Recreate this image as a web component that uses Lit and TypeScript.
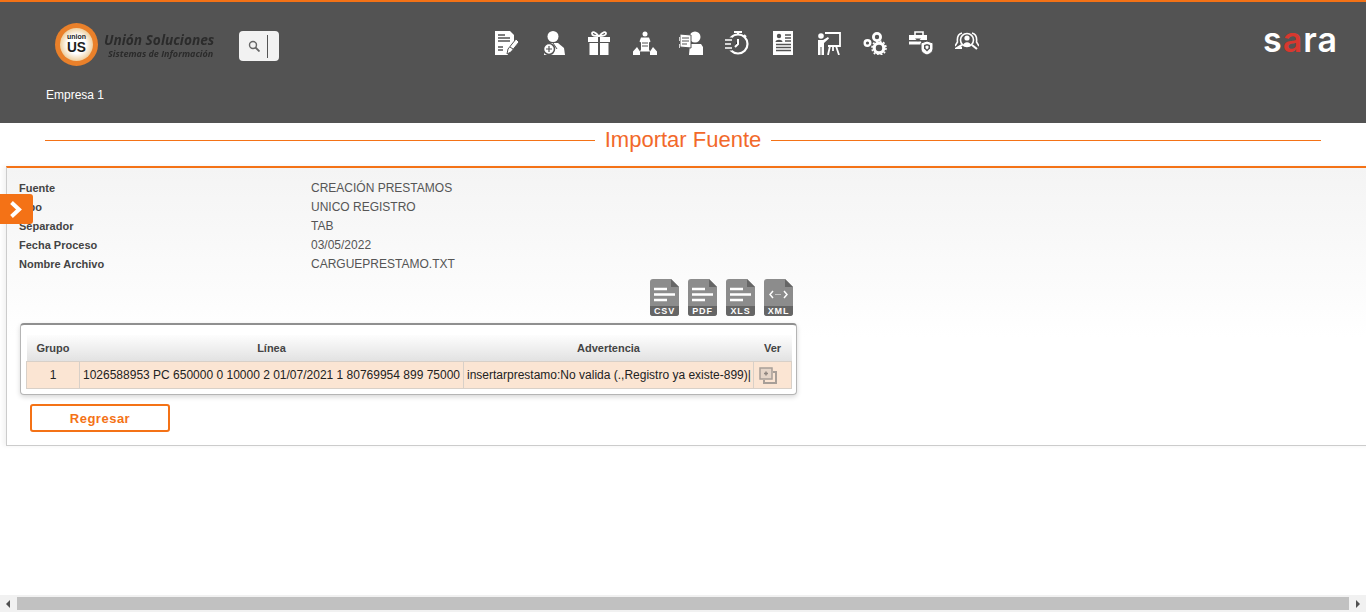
import {LitElement, html, css, svg} from 'lit';
import {customElement} from 'lit/decorators.js';

const BG = '#535353';

const NAV_ICONS = [
  // document with pencil
  svg`<path fill="#fff" d="M0 0h15l4 4v9l-6 8v3H0z"/><path stroke="${BG}" stroke-width="1.400" d="M3 4h7M3 7h12M3 10h12M3 16h5M3 19h5"/><path fill="#fff" stroke="${BG}" d="M12 23l1-5 8-10 3 3-8 10z"/><path stroke="${BG}" d="M15 16l3 2"/>`,
  // person with round badge
  svg`<circle cx="12" cy="5.500" r="5.500" fill="#fff"/><path fill="#fff" d="M7 12h10l6 5 1 7H3l1-8z"/><path stroke="${BG}" d="M12 12l4 6"/><circle cx="8" cy="18" r="5.500" fill="#fff" stroke="${BG}" stroke-width="1.500"/><path stroke="${BG}" stroke-width="1.200" d="M5 18h6M8 15v6"/>`,
  // gift
  svg`<path fill="#fff" d="M1 6h10v5H1zM13 6h10v5H13zM2.500 12H11v12H2.500zM13 12h8.500v12H13z"/><path fill="none" stroke="#fff" stroke-width="1.800" d="M11.500 5C9 1 5 0 5 2.500S8 5 11.500 5C15 5 19 5 19 2.500S15 1 12.500 5"/>`,
  // pyramid of people
  svg`<circle cx="12" cy="3" r="2.500" fill="#fff"/><path fill="#fff" d="M8 6.500h8l1.500 4-1.500 1v7l1 2H7l1-2v-7l-1.500-1z"/><path stroke="${BG}" d="M9 12h6M9 15h6"/><path fill="#fff" d="M4 16l3 4.500V24H0v-3.500zM20 16l4 4.500V24h-7v-3.500z"/>`,
  // person holding a document
  svg`<circle cx="16" cy="6" r="5.500" fill="#fff"/><path fill="#fff" d="M11 13h11l2 3v8H10z"/><path fill="#fff" stroke="${BG}" d="M1 3l11 1v13L1 16z"/><path stroke="${BG}" d="M3 7h7M3 10h7M3 13h5"/><path stroke="#fff" stroke-width="1.500" d="M0 6v4M0 13v4"/>`,
  // stopwatch
  svg`<circle cx="13" cy="13" r="9.500" fill="none" stroke="#fff" stroke-width="2.200"/><path stroke="#fff" stroke-width="2" d="M13 0v3M9 1h8M13 8v5l-3 3M19 4l2 2"/><path stroke="${BG}" stroke-width="5" d="M0 9h7M0 13h6M0 17h7"/><path stroke="#fff" stroke-width="1.500" d="M0 9h7M0 13h6M0 17h7"/>`,
  // CV sheet
  svg`<path fill="#fff" d="M2 0h20v24H2z"/><circle cx="8" cy="5" r="2.200" fill="${BG}"/><path fill="${BG}" d="M4.500 11c0-3 7-3 7 0z"/><path stroke="${BG}" stroke-width="1.300" d="M14 4h6M14 7h6M14 10h6M5 13.500h15M5 16.500h15M5 19.500h15"/>`,
  // teacher at a board
  svg`<circle cx="4" cy="5" r="2.800" fill="#fff"/><path fill="#fff" d="M1 9h5l5-3 1 1.500L7 12v12H1z"/><path stroke="${BG}" d="M4 16v8"/><path fill="none" stroke="#fff" stroke-width="1.800" d="M8 2h15v13H11M13 15l-2 9M19 15l3 9M16 15v5"/>`,
  // gears
  svg`<circle cx="14" cy="6" r="3.600" fill="none" stroke="#fff" stroke-width="2.800"/><circle cx="4.500" cy="12" r="2.800" fill="none" stroke="#fff" stroke-width="2.400"/><circle cx="16" cy="17" r="4.800" fill="none" stroke="#fff" stroke-width="3.200"/><circle cx="16" cy="17" r="7" fill="none" stroke="#fff" stroke-width="1.600" stroke-dasharray="2 1.700"/>`,
  // briefcase and shield
  svg`<path fill="none" stroke="#fff" stroke-width="1.600" d="M6 4V1h8v3"/><path fill="#fff" d="M0 4h18v5H0zM0 10.500h12l1 3H0z"/><path fill="${BG}" d="M6 7.500l3 3 3-3z"/><path fill="#fff" stroke="${BG}" d="M12 12l6-2 6 2v6c0 3-3 5-6 6-3-1-6-3-6-6z"/><path fill="${BG}" d="M15 14l3-1 3 1v3.500l-3 3-3-3z"/><path fill="#fff" d="M16.500 15l1.500-.5 1.500.5v2l-1.500 1.500-1.500-1.500z"/>`,
  // group and magnifier
  svg`<circle cx="12" cy="9" r="6.500" fill="none" stroke="#fff" stroke-width="1.600"/><circle cx="12" cy="7" r="2.600" fill="#fff"/><path fill="#fff" d="M8 15c0-5 8-5 8 0z"/><path fill="none" stroke="#fff" stroke-width="1.600" d="M7 2C3 3 2 7 2.500 11L0 15M17 2c4 1 5 5 4.500 9L24 15"/><path stroke="#fff" stroke-width="2.200" d="M17 14l5 4M7 14l-5 3h5"/>`,
];

@customElement('app-root')
export class AppRoot extends LitElement {

  static override styles = css`
    :host {
      display: flex;
      flex-direction: column;
      height: 612px;
      overflow: hidden;
      position: relative;
      background: #fff;
      font-family: "Liberation Sans", Arial, sans-serif;
    }

    .top {
      height: 121px;
      flex: none;
      background: #535353;
      border-top: 2px solid #f47216;
      display: flex;
      flex-direction: column;
    }

    .top-row {
      display: grid;
      grid-template-columns: 480px 1fr 140px;
      height: 82px;
    }

    .brand {
      display: flex;
      align-items: flex-start;
      padding: 21px 0 0 54px;
    }

    .seal {
      width: 45px;
      height: 43px;
      flex: none;
      margin-right: 5px;
    }

    .brand-text {
      width: 135px;
      padding-top: 7px;
      font-family: "Open Sans", sans-serif;
      font-style: italic;
      font-weight: 700;
      color: #2b2b2b;
      white-space: nowrap;
      filter: blur(0.3px);
    }

    .brand-name {
      font-size: 13.7px;
      line-height: 19px;
    }

    .brand-sub {
      font-size: 9px;
      line-height: 12px;
      padding: 0 0 0 4px;
      margin-top: -1px;
    }

    .search {
      width: 40px;
      height: 30px;
      margin-top: 8px;
      border-radius: 4px;
      background: #f2f2f2;
      display: flex;
      align-items: center;
      box-sizing: border-box;
      padding-left: 9px;
      gap: 7px;
    }

    .search svg {
      width: 12px;
      height: 12px;
    }

    .caret {
      width: 1px;
      height: 23px;
      background: #555;
    }

    .nav {
      display: flex;
      gap: 22px;
      padding: 29px 0 0 15px;
      align-items: flex-start;
    }

    .nav svg {
      width: 24px;
      height: 24px;
      display: block;
      filter: blur(0.4px);
    }

    .sara {
      font-family: Inter, sans-serif;
      font-size: 34px;
      font-weight: 600;
      line-height: 34px;
      color: #fff;
      letter-spacing: 1px;
      padding: 21px 0 0 37px;
    }

    .sara span {
      color: #d8382f;
    }

    .company {
      color: #fff;
      font-size: 12px;
      padding-left: 46px;
      line-height: 14px;
      margin-top: 4px;
    }

    .title {
      height: 34px;
      flex: none;
      margin: 0 45px;
      display: flex;
      align-items: center;
      gap: 10px;
      color: #f2692a;
      font-size: 22px;
      white-space: nowrap;
    }

    .title::before,
    .title::after {
      content: '';
      flex: 1;
      height: 1px;
      background: #f47216;
    }

    .panel {
      margin: 9px -40px 0 6px;
      height: 280px;
      flex: none;
      box-sizing: border-box;
      border-top: 2px solid #f47216;
      border-left: 1px solid #ccc;
      border-bottom: 1px solid #ccc;
      background: linear-gradient(#f4f4f4, #fff 170px);
      padding: 10px 0 0 12px;
      box-shadow: -3px 0 4px rgba(0, 0, 0, 0.05);
    }

    .info {
      display: grid;
      grid-template-columns: 292px 1fr;
      grid-auto-rows: 19px;
      align-items: center;
      font-size: 12px;
      color: #555;
    }

    .info b {
      font-size: 11px;
      color: #444;
    }

    .exports {
      width: 774px;
      display: flex;
      justify-content: flex-end;
      gap: 9px;
      margin-top: 6px;
    }

    .file {
      width: 29px;
      height: 37px;
      position: relative;
    }

    .file svg {
      display: block;
    }

    .file span {
      position: absolute;
      left: 0;
      right: 0;
      bottom: 0;
      text-align: center;
      color: #fff;
      font-size: 9px;
      font-weight: 700;
      line-height: 10px;
      letter-spacing: 0.8px;
    }

    .grid-box {
      margin: 7px 0 0 1px;
      width: 777px;
      height: 72px;
      box-sizing: border-box;
      border: 1px solid #b5b5b5;
      border-top: 2px solid #8f8f8f;
      border-radius: 4px;
      background: #fff;
      box-shadow: 0 2px 5px rgba(0, 0, 0, 0.16);
      padding: 10px 5px 0 5px;
    }

    table {
      border-collapse: collapse;
      table-layout: fixed;
      width: 765px;
    }

    th {
      height: 26px;
      padding: 0;
      font-size: 11px;
      color: #444;
      background: linear-gradient(#fdfdfd, #e2e2e2);
    }

    td {
      height: 26px;
      padding: 0 3px;
      font-size: 12px;
      color: #222;
      background: #fbe5d3;
      border: 1px solid #d8d0c8;
      white-space: nowrap;
      overflow: hidden;
    }

    td.center {
      text-align: center;
    }

    td svg {
      display: block;
      margin-left: 2px;
    }

    .back {
      display: block;
      width: 140px;
      height: 28px;
      margin: 9px 0 0 11px;
      box-sizing: border-box;
      border: 2px solid #f47216;
      border-radius: 3px;
      background: #fff;
      color: #f47216;
      font: 700 13px "Liberation Sans", Arial, sans-serif;
      letter-spacing: 0.5px;
    }

    .toggle {
      position: absolute;
      left: 0;
      top: 194px;
      width: 33px;
      height: 30px;
      border-radius: 0 3px 3px 0;
      background: #f47216;
      display: flex;
      align-items: center;
      padding-left: 9px;
      box-sizing: border-box;
    }

    .scrollbar {
      margin-top: auto;
      height: 17px;
      flex: none;
      background: #f1f1f1;
      display: flex;
      align-items: center;
      justify-content: space-between;
      padding: 0 6px;
      box-sizing: border-box;
    }

    .thumb {
      flex: 1;
      height: 13px;
      margin: 0 7px;
      background: #c1c1c1;
    }

    .scrollbar i {
      width: 0;
      height: 0;
      border-top: 4px solid transparent;
      border-bottom: 4px solid transparent;
    }

    .arrow-l {
      border-right: 4px solid #505050;
    }

    .arrow-r {
      border-left: 4px solid #505050;
    }
  `;

  private seal() {
    return html`<svg class="seal" viewBox="0 0 45 43">
      <defs>
        <radialGradient id="core">
          <stop offset="0.55" stop-color="#fff"/>
          <stop offset="1" stop-color="#eecf9f"/>
        </radialGradient>
      </defs>
      <circle cx="22.500" cy="21.500" r="21.500" fill="#e9802a"/>
      <circle cx="22.500" cy="21.500" r="16.500" fill="url(#core)"/>
      <text x="13" y="15.500" font-family="Liberation Sans" font-size="6.500" font-weight="700" fill="#222" textLength="19" lengthAdjust="spacingAndGlyphs">union</text>
      <text x="13" y="29" font-family="Liberation Sans" font-size="14" font-weight="700" fill="#1d1d1d" textLength="19" lengthAdjust="spacingAndGlyphs">US</text>
    </svg>`;
  }

  private file(label: string) {
    const body = label === 'XML'
      ? svg`<path fill="none" stroke="#fff" stroke-width="1.500" d="M9 12l-3 3.500 3 3.500M20 12l3 3.500-3 3.500"/><path stroke="#fff" stroke-dasharray="1 1" d="M11.500 15.500h6"/>`
      : svg`<path stroke="#fff" stroke-width="2.500" d="M4 10h13M4 15.500h21M4 21h13"/>`;
    return html`<div class="file">
      <svg width="29" height="37" viewBox="0 0 29 37">
        <path fill="#8c8c8c" d="M3 0h18l8 8v26a3 3 0 0 1-3 3H3a3 3 0 0 1-3-3V3a3 3 0 0 1 3-3z"/>
        <path fill="#666" d="M21 0l8 8h-8zM0 27h29v7a3 3 0 0 1-3 3H3a3 3 0 0 1-3-3z"/>
        ${body}
      </svg>
      <span>${label}</span>
    </div>`;
  }

  protected override render() {
    const info = [
      ['Fuente', 'CREACIÓN PRESTAMOS'],
      ['Tipo', 'UNICO REGISTRO'],
      ['Separador', 'TAB'],
      ['Fecha Proceso', '03/05/2022'],
      ['Nombre Archivo', 'CARGUEPRESTAMO.TXT'],
    ];
    return html`
      <header class="top">
        <div class="top-row">
          <div class="brand">
            ${this.seal()}
            <div class="brand-text">
              <div class="brand-name">Unión Soluciones</div>
              <div class="brand-sub">Sistemas de Información</div>
            </div>
            <div class="search">
              <svg viewBox="0 0 12 12"><circle cx="5" cy="5" r="3.500" fill="none" stroke="#666" stroke-width="1.400"/><path stroke="#666" stroke-width="1.800" d="M7.500 7.500l4 4"/></svg>
              <div class="caret"></div>
            </div>
          </div>
          <nav class="nav">
            ${NAV_ICONS.map((icon) => html`<svg viewBox="0 0 24 24">${icon}</svg>`)}
          </nav>
          <div class="sara">s<span>a</span>ra</div>
        </div>
        <div class="company">Empresa 1</div>
      </header>

      <div class="title">Importar Fuente</div>

      <section class="panel">
        <div class="info">
          ${info.map(([label, value]) => html`<b>${label}</b><div>${value}</div>`)}
        </div>
        <div class="exports">
          ${['CSV', 'PDF', 'XLS', 'XML'].map((label) => this.file(label))}
        </div>
        <div class="grid-box">
          <table>
            <colgroup>
              <col style="width: 53px"/>
              <col style="width: 384px"/>
              <col style="width: 290px"/>
              <col style="width: 38px"/>
            </colgroup>
            <tr><th>Grupo</th><th>Línea</th><th>Advertencia</th><th>Ver</th></tr>
            <tr>
              <td class="center">1</td>
              <td>1026588953 PC 650000 0 10000 2 01/07/2021 1 80769954 899 75000</td>
              <td>insertarprestamo:No valida (.,Registro ya existe-899)|</td>
              <td>
                <svg width="18" height="17" viewBox="0 0 18 17">
                  <path fill="none" stroke="#a89f98" stroke-width="2" d="M14 5h3v11H5v-3"/>
                  <path fill="#e5d5c8" stroke="#a89f98" stroke-width="1.500" d="M1 1h12v11H1z"/>
                  <path stroke="#8f8680" stroke-width="1.500" d="M5 6.500h4M7 4.500v4"/>
                </svg>
              </td>
            </tr>
          </table>
        </div>
        <button class="back">Regresar</button>
      </section>

      <div class="toggle">
        <svg width="15" height="17" viewBox="0 0 15 17"><path fill="none" stroke="#fff" stroke-width="4" d="M2.500 1.500L10 8.500l-7.500 7"/></svg>
      </div>

      <div class="scrollbar">
        <i class="arrow-l"></i>
        <div class="thumb"></div>
        <i class="arrow-r"></i>
      </div>
    `;
  }
}

declare global {
  interface HTMLElementTagNameMap {
    'app-root': AppRoot;
  }
}
